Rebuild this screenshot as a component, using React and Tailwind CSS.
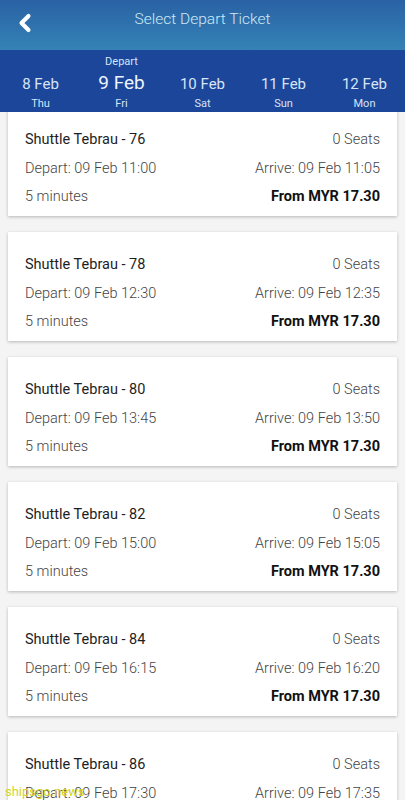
import { ChevronLeft } from "lucide-react";

const dates = [
  { date: "8 Feb", day: "Thu" },
  { date: "9 Feb", day: "Fri", active: true },
  { date: "10 Feb", day: "Sat" },
  { date: "11 Feb", day: "Sun" },
  { date: "12 Feb", day: "Mon" },
];

const trips = [
  { no: 76, dep: "11:00", arr: "11:05" },
  { no: 78, dep: "12:30", arr: "12:35" },
  { no: 80, dep: "13:45", arr: "13:50" },
  { no: 82, dep: "15:00", arr: "15:05" },
  { no: 84, dep: "16:15", arr: "16:20" },
  { no: 86, dep: "17:30", arr: "17:35" },
];

function App() {
  return (
    <div
      className="relative w-[405px] h-[800px] overflow-hidden bg-[#f4f4f4]"
      style={{ fontFamily: "Roboto, 'Liberation Sans', sans-serif" }}
    >
      <div className="relative z-10">
        <div className="h-[50px] flex items-center bg-gradient-to-b from-[#2a62a4] to-[#3482b6] relative">
          <ChevronLeft className="absolute left-[11px] top-[9px] text-white" size={28} strokeWidth={3.5} />
          <div className="flex-1 text-center text-[15.5px] font-light text-[#cfeaf6] pb-[11px]">Select Depart Ticket</div>
        </div>
        <div className="h-[62px] bg-[#1c469a] grid grid-cols-5 text-[#d6e4f7] pt-[5px]">
          {dates.map((d) => (
            <div key={d.date} className="flex flex-col items-center">
              <div className="h-[14px] text-[11px] leading-[14px]">{d.active ? "Depart" : ""}</div>
              <div
                className={
                  d.active
                    ? "h-[28px] text-[19px] leading-[28px] text-[#eef4fc]"
                    : "h-[28px] text-[15px] leading-[28px] pt-[1px]"
                }
              >
                {d.date}
              </div>
              <div className="text-[11px] leading-[14px]">{d.day}</div>
            </div>
          ))}
        </div>
      </div>
      <div className="-mt-[5px] px-[8px] flex flex-col gap-[16px]">
        {trips.map((t) => (
          <div
            key={t.no}
            className="bg-white h-[109px] px-[17px] pt-[21px] text-[14.5px] text-[#444] font-light shadow-[0_1px_3px_rgba(0,0,0,0.25)]"
          >
            <div className="flex justify-between h-[24px] items-center">
              <span className="text-[#1e1e1e] font-normal">Shuttle Tebrau - {t.no}</span>
              <span>0 Seats</span>
            </div>
            <div className="flex justify-between h-[29px] items-center mt-[2px]">
              <span>Depart: 09 Feb {t.dep}</span>
              <span>Arrive: 09 Feb {t.arr}</span>
            </div>
            <div className="flex justify-between h-[27px] items-center">
              <span>5 minutes</span>
              <span className="font-bold text-[#111]">From MYR 17.30</span>
            </div>
          </div>
        ))}
      </div>
      <div className="absolute left-[5px] bottom-[2px] z-20 text-[13px] text-[#d4d41c] leading-none">shipsgo.news</div>
    </div>
  );
}

export default App;
